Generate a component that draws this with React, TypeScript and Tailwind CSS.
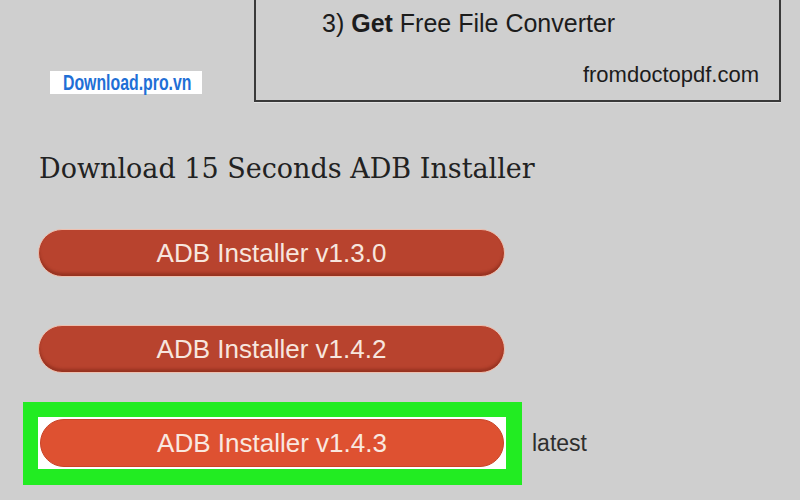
export default function App() {
  const versions = ["v1.3.0", "v1.4.2"];

  return (
    <div className="relative w-[800px] h-[500px] overflow-hidden bg-[#cfcfcf] font-['Liberation_Sans',Arial,sans-serif]">
      {/* ad box, top edge is cut off */}
      <div className="ml-[254px] w-[527px] h-[102px] border-2 border-t-0 border-[#3a3a3a] shadow-[0_1px_0_#e2e2e2] flex flex-col">
        <p className="pt-[11px] pl-[66px] text-[25px] leading-[25px] text-[#1c1c1c]">
          3) <b>Get</b> Free File Converter
        </p>
        <p className="mt-[28px] pr-[20px] text-right text-[22px] leading-[22px] text-[#1c1c1c]">
          fromdoctopdf.com
        </p>
      </div>

      {/* watermark */}
      <div className="absolute left-[50px] top-[71px] w-[152px] h-[23px] bg-white pl-[13px] flex items-center">
        <span className="inline-block origin-left scale-x-[0.72] font-bold text-[22px] leading-none text-[#1f6fd6] whitespace-nowrap">
          Download.pro.vn
        </span>
      </div>

      <h2 className="mt-[51px] ml-[39px] font-['DejaVu_Serif',Georgia,serif] text-[27px] leading-[32px] text-[#222]">
        Download 15 Seconds ADB Installer
      </h2>

      <div className="mt-[44px] ml-[38px] flex flex-col gap-[48px]">
        {versions.map((v) => (
          <div
            key={v}
            className="w-[467px] h-[48px] rounded-full bg-[#b8432e] border border-[#edc0b0] shadow-[inset_0_-3px_3px_rgba(90,20,10,0.35)] flex items-center justify-center text-[26px] text-[#f7e6de]"
          >
            ADB Installer {v}
          </div>
        ))}
      </div>

      <div className="mt-[29px] ml-[23px] flex items-center">
        <div className="border-[15px] border-r-[16px] border-b-[16px] border-[#22ec22] bg-white p-[2px]">
          <div className="w-[464px] h-[48px] rounded-full bg-[#de5131] border border-[#c94428] flex items-center justify-center text-[26px] text-[#f9e8e0]">
            ADB Installer v1.4.3
          </div>
        </div>
        <span className="ml-[10px] text-[23px] text-[#2e2e2e]">latest</span>
      </div>
    </div>
  );
}
